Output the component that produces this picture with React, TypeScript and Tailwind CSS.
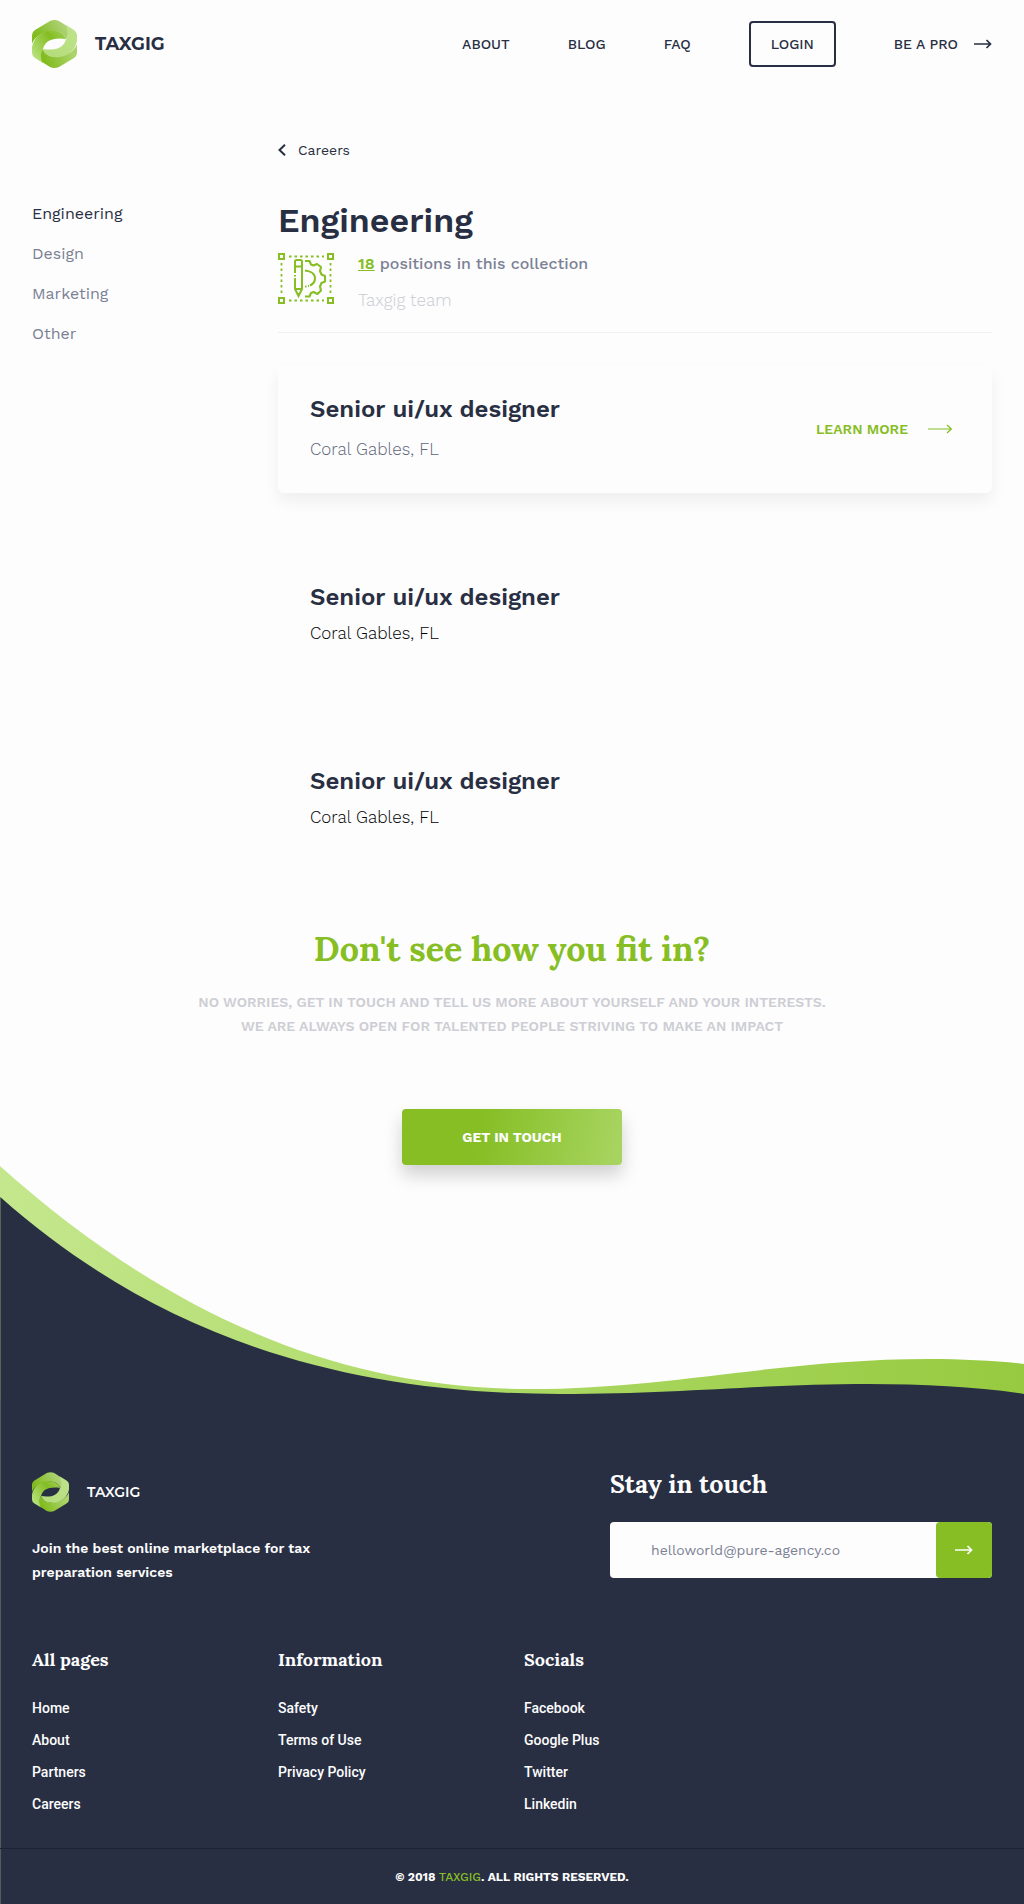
import React, { useId } from "react";

const sans = "font-['Work_Sans','Inter',sans-serif]";
const serif = "font-['Lora','Liberation_Serif',serif]";
const brand = "font-['Montserrat','Inter',sans-serif]";

function Logo({ className }: { className: string }) {
  const id = useId();
  const top = `${id}-top`;
  const left = `${id}-left`;
  const bottom = `${id}-bottom`;
  const right = `${id}-right`;
  const band =
    "M0 24V15Q0 12 3 10L18 1Q22.500 -1 27 1L35 6C37 12 36 17 34 19C32 12 24 10 16 12C7 13 1 20 0 24Z";
  const curl =
    "M0 27C2 18 8 12 18 11C26 10 32 13 34 19C22 17 13 20 11 29C9 31 9 37 11 43L3 38Q0 36 0 33Z";
  return (
    <svg viewBox="0 0 45 48" className={className} aria-hidden="true">
      <defs>
        <linearGradient id={top} x1="0" y1="0.6" x2="1" y2="0.2">
          <stop offset="0.1" stopColor="#82bc1f" />
          <stop offset="0.9" stopColor="#aed276" />
        </linearGradient>
        <linearGradient id={left} x1="0" y1="0.8" x2="1" y2="0.1">
          <stop offset="0" stopColor="#b9e381" />
          <stop offset="0.65" stopColor="#84bd22" />
          <stop offset="1" stopColor="#9fce55" />
        </linearGradient>
        <linearGradient id={bottom} x1="1" y1="0.3" x2="0" y2="0.6">
          <stop offset="0.1" stopColor="#82bc1f" />
          <stop offset="0.9" stopColor="#acd46c" />
        </linearGradient>
        <linearGradient id={right} x1="0" y1="1" x2="1" y2="0">
          <stop offset="0" stopColor="#bfe48d" />
          <stop offset="1" stopColor="#b3db78" />
        </linearGradient>
      </defs>
      <path d={band} fill={`url(#${top})`} />
      <path d={curl} fill={`url(#${left})`} />
      <g transform="rotate(180 22.500 24)">
        <path d={band} fill={`url(#${bottom})`} />
        <path d={curl} fill={`url(#${right})`} />
      </g>
    </svg>
  );
}

function Arrow({ className, thin }: { className: string; thin?: boolean }) {
  return thin ? (
    <svg viewBox="0 0 24 10" className={className} fill="none" stroke="currentColor" aria-hidden="true">
      <path d="M0 5H23M19 1L23.300 5L19 9" strokeWidth="1.200" />
    </svg>
  ) : (
    <svg viewBox="0 0 18 10" className={className} fill="none" stroke="currentColor" aria-hidden="true">
      <path d="M0 5H16M12.500 1L16.500 5L12.500 9" strokeWidth="1.700" />
    </svg>
  );
}

function DesignIcon() {
  return (
    <svg viewBox="0 0 56 51" className="h-[51px] w-14 shrink-0 text-[#86be24]" fill="none" stroke="currentColor" strokeWidth="2" aria-hidden="true">
      <path d="M1 1H6V6H1ZM50 1H55V6H50ZM1 45H6V50H1ZM50 45H55V50H50Z" />
      <path d="M11 3.500H46M11 47.500H46M3.500 10V42M52.500 10V42" strokeWidth="1.800" strokeDasharray="2.500 3" />
      <path d="M17 20V8.500Q17 7 18.500 7H22.500Q24 7 24 8.500V36L20.500 43L17 36V25M17 22V23.500M17 13.500H24M17 36H24M20.500 40V43" strokeWidth="2" />
      <path d="M27 8H31.500L33 11.500L35.500 12.500L39 11L43 14L42 18L43.500 21.500L47 23V28.500L43.500 30L42 33.500L43 37.500L39.500 41L35.500 39L33 40L31.500 43.500H27" strokeWidth="2.100" strokeLinejoin="round" />
      <path d="M27 17.500C33 18 37 21 37 25.500C37 28.500 35 31 32 32.500M30 33H31M27 33.500H28.500" strokeWidth="2.100" />
    </svg>
  );
}

const navItems = ["ABOUT", "BLOG", "FAQ"];
const categories = ["Engineering", "Design", "Marketing", "Other"];
const footerColumns = [
  { title: "All pages", links: ["Home", "About", "Partners", "Careers"] },
  { title: "Information", links: ["Safety", "Terms of Use", "Privacy Policy"] },
  { title: "Socials", links: ["Facebook", "Google Plus", "Twitter", "Linkedin"] },
];

function Header() {
  return (
    <header className="flex h-22 items-center justify-between px-8">
      <a href="#" className="flex items-center gap-[18px]">
        <Logo className="h-12 w-[45px]" />
        <span className={`${brand} text-lg font-bold`}>TAXGIG</span>
      </a>
      <nav className="flex items-center gap-[58px] text-sm font-medium">
        {navItems.map((item) => (
          <a key={item} href="#">{item}</a>
        ))}
        <button type="button" className="h-[46px] rounded border-2 border-[#292f43] px-5 font-medium">LOGIN</button>
        <a href="#" className="flex items-center gap-4">
          BE A PRO
          <Arrow className="h-[10px] w-[18px]" />
        </a>
      </nav>
    </header>
  );
}

function Job({ featured }: { featured?: boolean }) {
  return (
    <li
      className={
        featured
          ? "flex h-32 items-center justify-between rounded-md pr-10 pl-8 shadow-[0_8px_16px_rgba(0,0,0,0.06)]"
          : "flex h-32 items-center pt-1 pl-8"
      }
    >
      <div className={featured ? "flex flex-col gap-3" : "flex flex-col gap-2"}>
        <h2 className="text-2xl leading-7 font-semibold">Senior ui/ux designer</h2>
        <p className={featured ? "text-[17px] leading-7 font-light text-[#5f6579]" : "text-[17px] leading-7 font-light text-black"}>
          Coral Gables, FL
        </p>
      </div>
      {featured && (
        <a href="#" className="flex items-center gap-5 text-sm font-semibold text-[#86be24]">
          LEARN MORE
          <Arrow thin className="h-[10px] w-6" />
        </a>
      )}
    </li>
  );
}

function Footer() {
  return (
    <footer className="bg-[#292f43] text-[#fdfdfd] shadow-[inset_1px_0_0_#525c5c]">
      <div className="flex items-start justify-between px-8 pt-16">
        <div className="flex flex-col pt-2">
          <a href="#" className="flex items-center gap-[18px]">
            <Logo className="h-10 w-[37px]" />
            <span className={`${brand} text-sm font-semibold`}>TAXGIG</span>
          </a>
          <p className="mt-6 max-w-[300px] text-sm leading-6 font-semibold">
            Join the best online marketplace for tax preparation services
          </p>
        </div>
        <form className="w-[382px]" onSubmit={(event) => event.preventDefault()}>
          <label htmlFor="email" className={`${serif} block text-[25px] leading-10 font-bold`}>Stay in touch</label>
          <div className="mt-[18px] flex h-14 rounded bg-[#fdfdfd]">
            <input
              id="email"
              type="email"
              placeholder="helloworld@pure-agency.co"
              className="min-w-0 flex-1 rounded pl-[41px] text-sm outline-none placeholder:text-[#7b8194]"
            />
            <button type="submit" aria-label="Subscribe" className="flex w-14 items-center justify-center rounded bg-[#86be24]">
              <Arrow className="h-[10px] w-[18px]" />
            </button>
          </div>
        </form>
      </div>
      <div className="mt-[60px] grid grid-cols-4 gap-6 px-8 pb-7">
        {footerColumns.map((column) => (
          <section key={column.title}>
            <h3 className={`${serif} text-lg leading-8 font-bold`}>{column.title}</h3>
            <ul className="mt-4 font-['Roboto',sans-serif] text-sm leading-8 font-medium">
              {column.links.map((link) => (
                <li key={link}><a href="#">{link}</a></li>
              ))}
            </ul>
          </section>
        ))}
      </div>
      <div className="flex h-14 items-center justify-center border-t border-[#1d2232] text-xs font-bold">
        <p>© 2018 <a href="#" className="font-medium text-[#86be24]">TAXGIG</a>. ALL RIGHTS RESERVED.</p>
      </div>
    </footer>
  );
}

export default function App() {
  const waveFill = useId();
  return (
    <div className={`${sans} bg-[#fdfdfd] text-[#292f43]`}>
      <Header />
      <main>
        <div className="grid grid-cols-4 gap-6 px-8 pt-12">
          <aside className="pt-[58px]">
            <ul className="leading-10">
              {categories.map((category, index) => (
                <li key={category}>
                  <a href="#" className={index === 0 ? "" : "text-[#7b8194]"}>{category}</a>
                </li>
              ))}
            </ul>
          </aside>
          <div className="col-span-3">
            <a href="#" className="flex h-7 items-center gap-3 text-sm">
              <svg viewBox="0 0 8 12" className="h-3 w-2" fill="none" stroke="currentColor" strokeWidth="2" aria-hidden="true">
                <path d="M7 0.700L1.500 6L7 11.300" />
              </svg>
              Careers
            </a>
            <h1 className="mt-8 text-[34px] leading-12 font-semibold">Engineering</h1>
            <div className="mt-2 flex gap-6 border-b border-[#f0f0f0] pb-5">
              <div className="pt-px"><DesignIcon /></div>
              <div>
                <p className="leading-6 font-medium text-[#7b8194]">
                  <a href="#" className="font-semibold text-[#86be24] underline">18</a> positions in this collection
                </p>
                <p className="mt-3 text-[17px] leading-6 font-light text-[#c9cbd2]">Taxgig team</p>
              </div>
            </div>
            <ul className="mt-8 flex flex-col gap-14">
              <Job featured />
              <Job />
              <Job />
            </ul>
          </div>
        </div>
        <section className="flex flex-col items-center px-8 pt-16 text-center">
          <h2 className={`${serif} text-[34px] leading-12 font-bold text-[#86be24]`}>Don't see how you fit in?</h2>
          <p className="mt-[17px] max-w-[640px] text-sm leading-6 font-semibold text-[#cdced4]">
            NO WORRIES, GET IN TOUCH AND TELL US MORE ABOUT YOURSELF AND YOUR INTERESTS. WE ARE ALWAYS OPEN FOR TALENTED PEOPLE STRIVING TO MAKE AN IMPACT
          </p>
          <button
            type="button"
            className="mt-[71px] h-14 w-[220px] rounded bg-[linear-gradient(100deg,#86be24_35%,#a8d562)] text-sm font-bold text-[#fdfdfd] shadow-[0_10px_18px_rgba(0,0,0,0.18)]"
          >
            GET IN TOUCH
          </button>
        </section>
        <svg viewBox="0 0 1024 235" preserveAspectRatio="none" className="block h-[235px] w-full" aria-hidden="true">
          <defs>
            <linearGradient id={waveFill}>
              <stop offset="0" stopColor="#c4e78d" />
              <stop offset="0.5" stopColor="#abd863" />
              <stop offset="1" stopColor="#97ca40" />
            </linearGradient>
          </defs>
          <path d="M0 1C150 135 320 224 530 224C670 224 780 194 930 194C962 194 1000 196 1024 199V235H0Z" fill={`url(#${waveFill})`} />
          <path d="M0.300 32C150 165 330 229 560 229C680 229 760 219 869 219C925 219 980 222 1024 229V235H0.300Z" fill="#292f43" />
        </svg>
      </main>
      <Footer />
    </div>
  );
}
